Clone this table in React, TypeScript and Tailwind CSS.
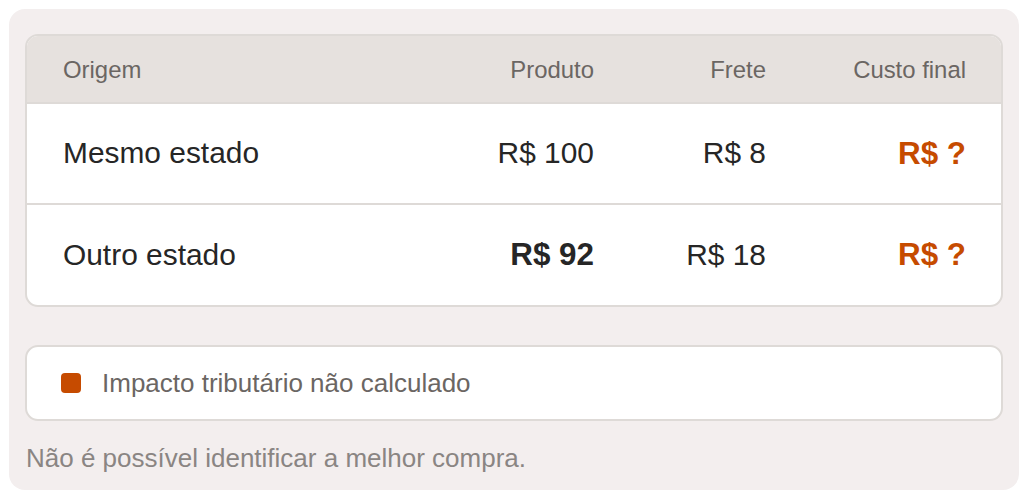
export default function App() {
  const font = { fontFamily: '"Liberation Sans", Arial, sans-serif' };
  return (
    <div className="w-[1024px] h-[498px] bg-white pt-[9px] pl-[9px]" style={font}>
      <div className="w-[1010px] h-[481px] rounded-[16px] bg-[#f3eeee] px-[16px] pt-[25px]">
        <div className="rounded-[13px] border-2 border-[#dedad7] bg-white overflow-hidden">
          <div className="grid grid-cols-[1fr_200px_172px_200px] items-center h-[68px] bg-[#e6e1de] border-b-2 border-[#dedad7] pl-[36px] pr-[35px] text-[23.9px] text-[#6b6663]">
            <div className="pt-[1px]">Origem</div>
            <div className="pt-[1px] text-right">Produto</div>
            <div className="pt-[1px] text-right">Frete</div>
            <div className="pt-[1px] text-right">Custo final</div>
          </div>
          <div className="grid grid-cols-[1fr_200px_172px_200px] items-center h-[101px] border-b-2 border-[#dedad7] pl-[36px] pr-[35px] text-[29.9px] text-[#262626]">
            <div>Mesmo estado</div>
            <div className="text-right">R$ 100</div>
            <div className="text-right">R$ 8</div>
            <div className="text-right font-bold text-[31.4px] text-[#c64b00]">R$ ?</div>
          </div>
          <div className="grid grid-cols-[1fr_200px_172px_200px] items-center h-[100px] pl-[36px] pr-[35px] text-[29.9px] text-[#262626]">
            <div>Outro estado</div>
            <div className="text-right font-bold text-[31.4px]">R$ 92</div>
            <div className="text-right">R$ 18</div>
            <div className="text-right font-bold text-[31.4px] text-[#c64b00]">R$ ?</div>
          </div>
        </div>
        <div className="mt-[38px] h-[76px] rounded-[13px] border-2 border-[#dedad7] bg-white flex items-center pl-[34px] gap-[21px]">
          <div className="w-[20px] h-[20px] rounded-[4px] bg-[#c64b00]" />
          <div className="text-[26px] text-[#6b6663]">Impacto tributário não calculado</div>
        </div>
        <div className="mt-[22px] pl-[1px] text-[26px] leading-[30px] text-[#8a8583]">
          Não é possível identificar a melhor compra.
        </div>
      </div>
    </div>
  );
}
